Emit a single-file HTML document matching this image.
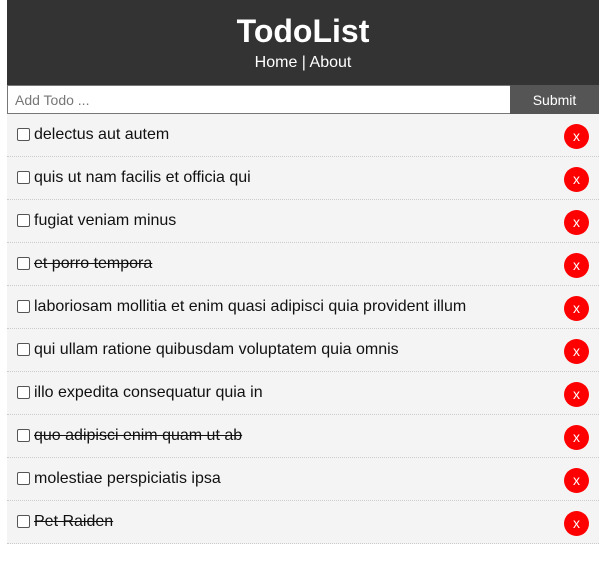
<!DOCTYPE html>
<html><head><style>
body{margin:0;padding:0 8px 0 7px;font-family:"Liberation Sans",Arial,sans-serif;background:#fff;width:592px}
header{background:#333;color:#fff;text-align:center;height:85px;box-sizing:border-box;padding-top:12px}
h1{margin:0;font-size:32px;line-height:38px;font-weight:bold}
nav{font-size:16px;line-height:18px;margin-top:4px}
form{display:flex;height:29px}
input{flex:10;border:1px solid #777;border-right:none;margin:0;padding:0 7px;font-size:14px;font-family:inherit;height:29px;box-sizing:border-box;color:#555}
input::placeholder{color:#777}
.sub{width:89px;background:#555;color:#fff;font-size:14px;display:flex;align-items:center;justify-content:center}
.item{background:#f4f4f4;height:42px;border-bottom:1px dotted #ccc;position:relative;font-size:16px;color:#111}
.cb{position:absolute;left:10px;top:14px;width:11px;height:11px;border:1px solid #555;border-radius:2px;background:#fff}
.t{position:absolute;left:27px;top:12px;line-height:18px}
.d .t{text-decoration:line-through}
.x{position:absolute;left:557px;top:10px;width:25px;height:25px;border-radius:50%;background:#f00;color:#fff;font-size:14px;text-align:center;line-height:24px}
</style></head><body>
<header><h1>TodoList</h1><nav>Home | About</nav></header>
<form><input placeholder="Add Todo ..."><div class="sub">Submit</div></form>
<div class="item"><span class="cb"></span><span class="t">delectus aut autem</span><span class="x">x</span></div>
<div class="item"><span class="cb"></span><span class="t">quis ut nam facilis et officia qui</span><span class="x">x</span></div>
<div class="item"><span class="cb"></span><span class="t">fugiat veniam minus</span><span class="x">x</span></div>
<div class="item d"><span class="cb"></span><span class="t">et porro tempora</span><span class="x">x</span></div>
<div class="item"><span class="cb"></span><span class="t">laboriosam mollitia et enim quasi adipisci quia provident illum</span><span class="x">x</span></div>
<div class="item"><span class="cb"></span><span class="t">qui ullam ratione quibusdam voluptatem quia omnis</span><span class="x">x</span></div>
<div class="item"><span class="cb"></span><span class="t">illo expedita consequatur quia in</span><span class="x">x</span></div>
<div class="item d"><span class="cb"></span><span class="t">quo adipisci enim quam ut ab</span><span class="x">x</span></div>
<div class="item"><span class="cb"></span><span class="t">molestiae perspiciatis ipsa</span><span class="x">x</span></div>
<div class="item d"><span class="cb"></span><span class="t">Pet Raiden</span><span class="x">x</span></div>
</body></html>
